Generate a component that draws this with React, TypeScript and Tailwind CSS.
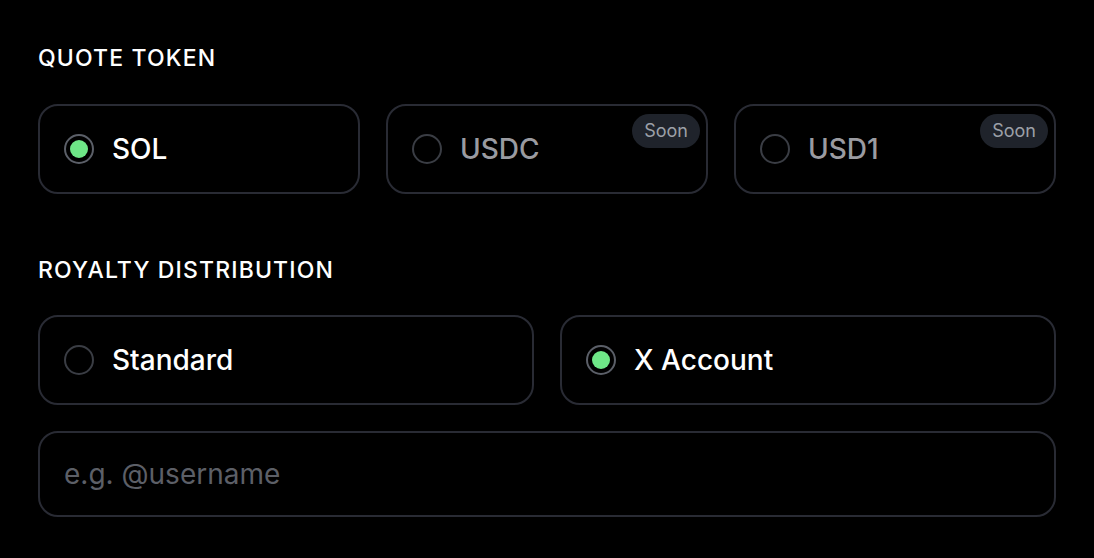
import { FC } from 'react';

type Opt = { label: string; selected?: boolean; disabled?: boolean; soon?: boolean };

const Radio: FC<{ on?: boolean }> = ({ on }) => (
  <span
    className={`flex h-[30px] w-[30px] shrink-0 items-center justify-center rounded-full border-2 ${
      on ? 'border-[#5b5f68]' : 'border-[#3a3d44]'
    }`}
  >
    {on && <span className="h-[18px] w-[18px] rounded-full bg-[#6ee787]" />}
  </span>
);

const OptionCard: FC<{ opt: Opt }> = ({ opt }) => (
  <div className="relative flex h-[90px] flex-1 items-center gap-[18px] rounded-[20px] border-2 border-[#292b34] bg-black px-[24px]">
    <Radio on={opt.selected} />
    <span className={`text-[28px] font-medium ${opt.disabled ? 'text-[#9a9ba1]' : 'text-white'}`}>{opt.label}</span>
    {opt.soon && (
      <span className="absolute right-[6px] top-[8px] rounded-full bg-[#1f232b] px-[12px] py-[6px] text-[18px] leading-[22px] text-[#9ca0a8]">
        Soon
      </span>
    )}
  </div>
);

const Heading: FC<{ children: React.ReactNode }> = ({ children }) => (
  <h2 className="text-[23px] font-medium uppercase tracking-[0.05em] text-white">{children}</h2>
);

export default function App() {
  const quote: Opt[] = [
    { label: 'SOL', selected: true },
    { label: 'USDC', disabled: true, soon: true },
    { label: 'USD1', disabled: true, soon: true },
  ];
  const royalty: Opt[] = [{ label: 'Standard' }, { label: 'X Account', selected: true }];

  return (
    <div className="h-[558px] w-[1094px] bg-black px-[38px] pt-[41px]" style={{ fontFamily: 'Inter, "Noto Sans", sans-serif' }}>
      <Heading>Quote Token</Heading>
      <div className="mt-[28px] flex gap-[26px]">
        {quote.map((o) => (
          <OptionCard key={o.label} opt={o} />
        ))}
      </div>

      <div className="mt-[59px]">
        <Heading>Royalty Distribution</Heading>
      </div>
      <div className="mt-[28px] flex gap-[26px]">
        {royalty.map((o) => (
          <OptionCard key={o.label} opt={o} />
        ))}
      </div>

      <input
        placeholder="e.g. @username"
        className="mt-[26px] h-[86px] w-full rounded-[20px] border-2 border-[#292b34] bg-black px-[24px] text-[28px] text-white outline-none placeholder:text-[#5c5f67]"
      />
    </div>
  );
}
